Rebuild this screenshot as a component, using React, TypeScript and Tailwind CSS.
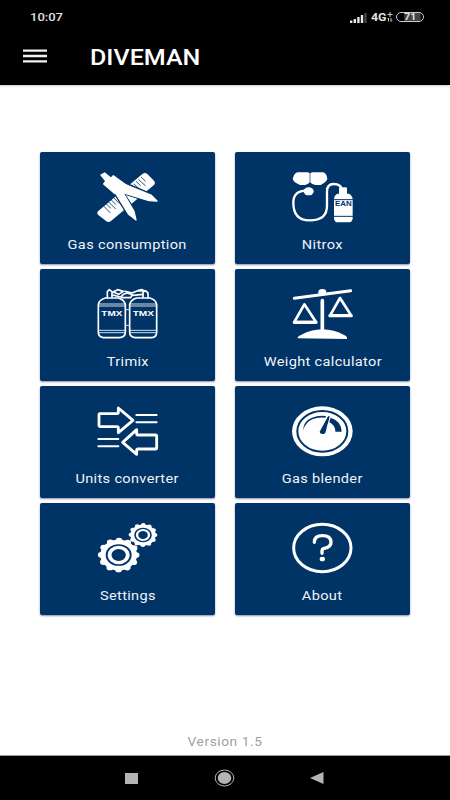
import type { ReactNode } from "react";

const NAVY = "#003366";

type IconProps = {
  viewBox: string;
  children: ReactNode;
};

function Icon({ viewBox, children }: IconProps) {
  return (
    <svg
      viewBox={viewBox}
      className="h-[65px] w-[85px] overflow-visible"
      fill="none"
      strokeLinecap="round"
      strokeLinejoin="round"
    >
      {children}
    </svg>
  );
}

function CompassIcon() {
  return (
    <Icon viewBox="0 9 255 195">
      <path
        d="M39 154 L172 42 Q180 36 187 42 L207 62 Q213 69 206 76 L78 183 Q71 189 64 184 L39 164 Q34 159 39 154Z"
        fill="white"
      />
      <path
        d="M56 138l19 20M63 131l14 13M70 125l21 21M78 119l14 14M86 113l16 17M138 80l13 12M147 72l17 16M154 65l12 11M161 59l20 18M169 52l12 11"
        stroke={NAVY}
        strokeWidth="2.5"
      />
      {/* gap between the compass legs and the ruler */}
      <path
        d="M112 97 L150 155 L153 181 M112 97 L192 123 L218 125 M122 72 L198 104 M88 96 L130 164"
        stroke={NAVY}
        strokeWidth="9"
      />
      <g fill="white" stroke="white" strokeWidth="4">
        <path d="M48 45L59 39L77 54L65 66Z" />
        <path d="M85 47L124 76L112 97L90 101L56 72L65 60L76 56Z" />
        <path d="M86 90L113 96L147 154L153 180L131 163Z" />
        <path d="M110 69L198 105L216 123L192 122L108 96Z" />
      </g>
    </Icon>
  );
}

function NitroxIcon() {
  return (
    <Icon viewBox="0 9 255 195">
      <path
        d="M54 37H84L90 40L96 37H128Q136 37 140 48L142 56Q141 62 133 68L122 75H106Q96 74 90 67Q84 74 75 75H60L47 68Q39 62 38 56L41 48Q46 37 54 37Z"
        fill="white"
      />
      <path d="M90 38v30" stroke={NAVY} strokeWidth="2" />
      <ellipse cx="86" cy="94" rx="15" ry="12" fill="white" />
      <path
        d="M80 92 Q40 92 40 128 Q40 181 89 181 Q141 181 141 137 V94 Q141 72 161 72 Q183 72 186 89"
        stroke="white"
        strokeWidth="7"
      />
      <rect x="177" y="82" width="24" height="24" rx="4" fill="white" />
      <path
        d="M173 101h34q10 5 11 16v59q-2 11-12 11h-31q-12 0-13-11v-59q1-12 11-16Z"
        fill="white"
      />
      <path d="M162 119h57M162 169h57" stroke={NAVY} strokeWidth="3" />
      <text
        x="165"
        y="137"
        textLength="50"
        lengthAdjust="spacingAndGlyphs"
        fill={NAVY}
        className="font-['Liberation_Sans'] text-[19px] font-bold"
      >
        EAN
      </text>
    </Icon>
  );
}

function TrimixIcon() {
  return (
    <Icon viewBox="0 0 255 195">
      <g stroke="white" strokeWidth="5">
        <path d="M40 74q2-15 21-20h39q17 5 21 19v84q0 14-16 16H55q-15-2-15-17Z" />
        <path d="M134 73q4-14 21-19h40q18 5 20 20v83q-1 15-15 16h-50q-16-2-16-16Z" />
        <path
          d="M40 72h81M134 72h81M40 78h81M134 78h81M40 151h81M134 151h81M40 158h81M134 158h81M121 89h13M121 136h13"
          strokeWidth="2.5"
        />
        <path d="M67 53V35l6-6 8 6v16M174 52V36l7-4 8 7v14" />
        <path d="M84 36l14-7 17 5-14 9Z" />
        <path d="M83 45l24 6 8-8 12-4 15 5-5 9h-26" />
        <path d="M120 34l21 5 17-7 20 1M143 46l31-3M160 32l11-3 9 4" />
      </g>
      <g
        fill="white"
        className="font-['Liberation_Sans'] text-[24px] font-bold"
      >
        <text x="49" y="109" textLength="63" lengthAdjust="spacingAndGlyphs">
          TMX
        </text>
        <text x="143" y="109" textLength="64" lengthAdjust="spacingAndGlyphs">
          TMX
        </text>
      </g>
    </Icon>
  );
}

function ScaleIcon() {
  return (
    <Icon viewBox="0 0 255 195">
      <path d="M43 55L212 32" stroke="white" strokeWidth="9" />
      <ellipse cx="127" cy="37" rx="12" ry="10" fill="white" />
      <path d="M127 62v88" stroke="white" strokeWidth="11" />
      <path
        d="M53 175q-2-5 10-10q29-16 64-17q36 1 65 17q11 5 9 12Z"
        fill="white"
      />
      <path
        d="M73 73L43 126h65ZM180 54L150 107h64Z"
        stroke="white"
        strokeWidth="8"
      />
      <path d="M43 127h65M150 107h63" stroke="white" strokeWidth="10" />
    </Icon>
  );
}

function ConvertIcon() {
  return (
    <Icon viewBox="0 -3 255 195">
      <g stroke="white" strokeWidth="8.5">
        <path d="M45 47h52q3 0 3-4V30l44 37-44 37V90q0-4-4-4H46q-4 0-4-4V51q0-4 3-4Z" />
        <path d="M211 111h-52q-4 0-4-4V95l-42 38 42 36v-12q0-4 4-4h52q4 0 4-4v-34q0-4-4-4Z" />
        <path
          d="M154 51h61M154 73h61M40 123h60M40 145h60"
          strokeWidth="6"
        />
      </g>
    </Icon>
  );
}

function GaugeIcon() {
  return (
    <Icon viewBox="0 -3 255 195">
      <ellipse cx="127" cy="100" rx="91" ry="75" fill="white" />
      <ellipse cx="127" cy="100" rx="75" ry="61" stroke={NAVY} strokeWidth="6" />
      <path
        d="M69 98q1-29 27-39q20-8 42-5l-2 5q-22-3-39 5q-20 8-28 34Z"
        fill={NAVY}
      />
      <path d="M152 59q33 11 33 42h-19q0-20-19-29Z" fill={NAVY} />
      <path d="M144 54L119 101q0 6 8 7q9 0 10-7L150 56Z" fill={NAVY} />
      <path d="M151 56l-10 34M142 55l-14 26" stroke="white" strokeWidth="2.5" />
    </Icon>
  );
}

function GearsIcon() {
  return (
    <Icon viewBox="0 -3 255 195">
      <g transform="translate(101 120) scale(1.2 1)">
        <circle r="46" fill="white" />
        <circle
          r="43.5"
          pathLength="156"
          stroke="white"
          strokeWidth="17"
          strokeDasharray="0 13"
        />
        <circle r="30" stroke={NAVY} strokeWidth="5" />
        <circle r="18" fill={NAVY} />
      </g>
      <g transform="translate(174 60) scale(1.2 1)">
        <circle r="31.5" fill="white" />
        <circle
          r="30"
          pathLength="156"
          stroke="white"
          strokeWidth="12"
          strokeDasharray="0 13"
        />
        <circle r="20" stroke={NAVY} strokeWidth="4" />
        <circle r="12" fill={NAVY} />
      </g>
    </Icon>
  );
}

function AboutIcon() {
  return (
    <Icon viewBox="0 -3 255 195">
      <ellipse cx="127" cy="99" rx="86" ry="71" stroke="white" strokeWidth="9" />
      <path
        d="M103 82q0-20 24-20q26 0 26 20q0 15-20 18q-7 1-7 8v7"
        stroke="white"
        strokeWidth="10"
      />
      <ellipse cx="127" cy="132" rx="8" ry="7" fill="white" />
    </Icon>
  );
}

const tiles = [
  { label: "Gas consumption", icon: <CompassIcon /> },
  { label: "Nitrox", icon: <NitroxIcon /> },
  { label: "Trimix", icon: <TrimixIcon /> },
  { label: "Weight calculator", icon: <ScaleIcon /> },
  { label: "Units converter", icon: <ConvertIcon /> },
  { label: "Gas blender", icon: <GaugeIcon /> },
  { label: "Settings", icon: <GearsIcon /> },
  { label: "About", icon: <AboutIcon /> },
];

function StatusBar() {
  return (
    <div className="flex h-[34px] items-center justify-between pl-[30px] pr-[26px] text-[#e2e2e2]">
      <span className="origin-left scale-x-[1.13] pt-[2px] text-[11.5px] font-medium leading-none">
        10:07
      </span>
      <div className="flex items-center">
        <svg viewBox="0 0 17 11" className="mr-[4px] h-[11px] w-[17px]">
          <path
            d="M0 8.5h2.4V11H0zM3.6 7H6v4H3.6zM7.2 5h2.4v6H7.2zM10.8 3h2.4v8h-2.4z"
            fill="#e8e8e8"
          />
          <path d="M14.4 1h2.2v10h-2.2z" fill="#4a4a4a" />
        </svg>
        <span className="w-[16px] origin-left scale-x-[1.12] pt-[1px] text-[11px] font-bold leading-none">
          4G
        </span>
        <svg
          viewBox="0 0 6 10"
          className="mr-[3px] h-[10px] w-[6px]"
          fill="none"
          stroke="#ccc"
        >
          <path d="M0.5 2.5h5M3 0v5M1.5 9.5V6l-1 1M4 6v3.5l1-1" />
        </svg>
        <div className="flex h-[10px] w-[28px] items-center justify-center rounded-full border border-[#ccc] bg-[linear-gradient(to_right,#000_25%,#444_30%,#444_90%,#000_91%)]">
          <span className="scale-x-[1.15] text-[9px] font-bold leading-none">
            71
          </span>
        </div>
      </div>
    </div>
  );
}

export default function App() {
  return (
    <div className="flex h-[800px] w-[450px] flex-col bg-white font-['Roboto',sans-serif]">
      <header className="h-[85px] shrink-0 bg-black shadow-[0_1px_2px_rgba(70,20,40,0.25)]">
        <StatusBar />
        <div className="flex h-[44px] items-center pl-[23px]">
          <svg viewBox="0 0 24 14" className="h-[14px] w-[24px]">
            <path
              d="M0 0.4h24v2.4H0zM0 5.8h24v2.4H0zM0 11.2h24v2.4H0z"
              fill="#f2f2f2"
            />
          </svg>
          <h1 className="ml-[43px] origin-left scale-x-[1.14] pt-[3px] text-[22px] font-medium leading-none text-white">
            DIVEMAN
          </h1>
        </div>
      </header>

      <main className="flex flex-1 flex-col items-center pt-[66.5px]">
        <div className="grid grid-cols-[175px_175px] gap-x-[20px] gap-y-[4.5px]">
          {tiles.map((tile) => (
            <div
              key={tile.label}
              className="flex h-[112.5px] flex-col items-center rounded-[2px] bg-[#003366] pt-[11.5px] shadow-[0_1px_2px_rgba(0,0,60,0.45)]"
            >
              {tile.icon}
              <span className="mt-[9px] scale-x-[1.12] whitespace-nowrap text-[13px] leading-[16px] tracking-[0.3px] text-[#f0f3f6]">
                {tile.label}
              </span>
            </div>
          ))}
        </div>
        <p className="mb-[5px] mt-auto scale-x-[1.1] text-[12.5px] leading-[16px] tracking-[0.5px] text-[#a0a0a0]">
          Version 1.5
        </p>
      </main>

      <nav className="flex h-[45px] shrink-0 items-center border-t border-[#999] bg-black pl-[125px]">
        <span className="h-[11px] w-[13px] bg-[#b4b4b4]" />
        <svg viewBox="0 0 20 18" className="ml-[76px] h-[18px] w-[21px]">
          <ellipse
            cx="10"
            cy="9"
            rx="9.3"
            ry="8"
            fill="none"
            stroke="#b4b4b4"
          />
          <ellipse cx="10" cy="9" rx="6.8" ry="6" fill="#b4b4b4" />
        </svg>
        <svg viewBox="0 0 14 12" className="ml-[75px] h-[12px] w-[14px]">
          <path d="M0 6L13.5 0v12z" fill="#b4b4b4" />
        </svg>
      </nav>
    </div>
  );
}
